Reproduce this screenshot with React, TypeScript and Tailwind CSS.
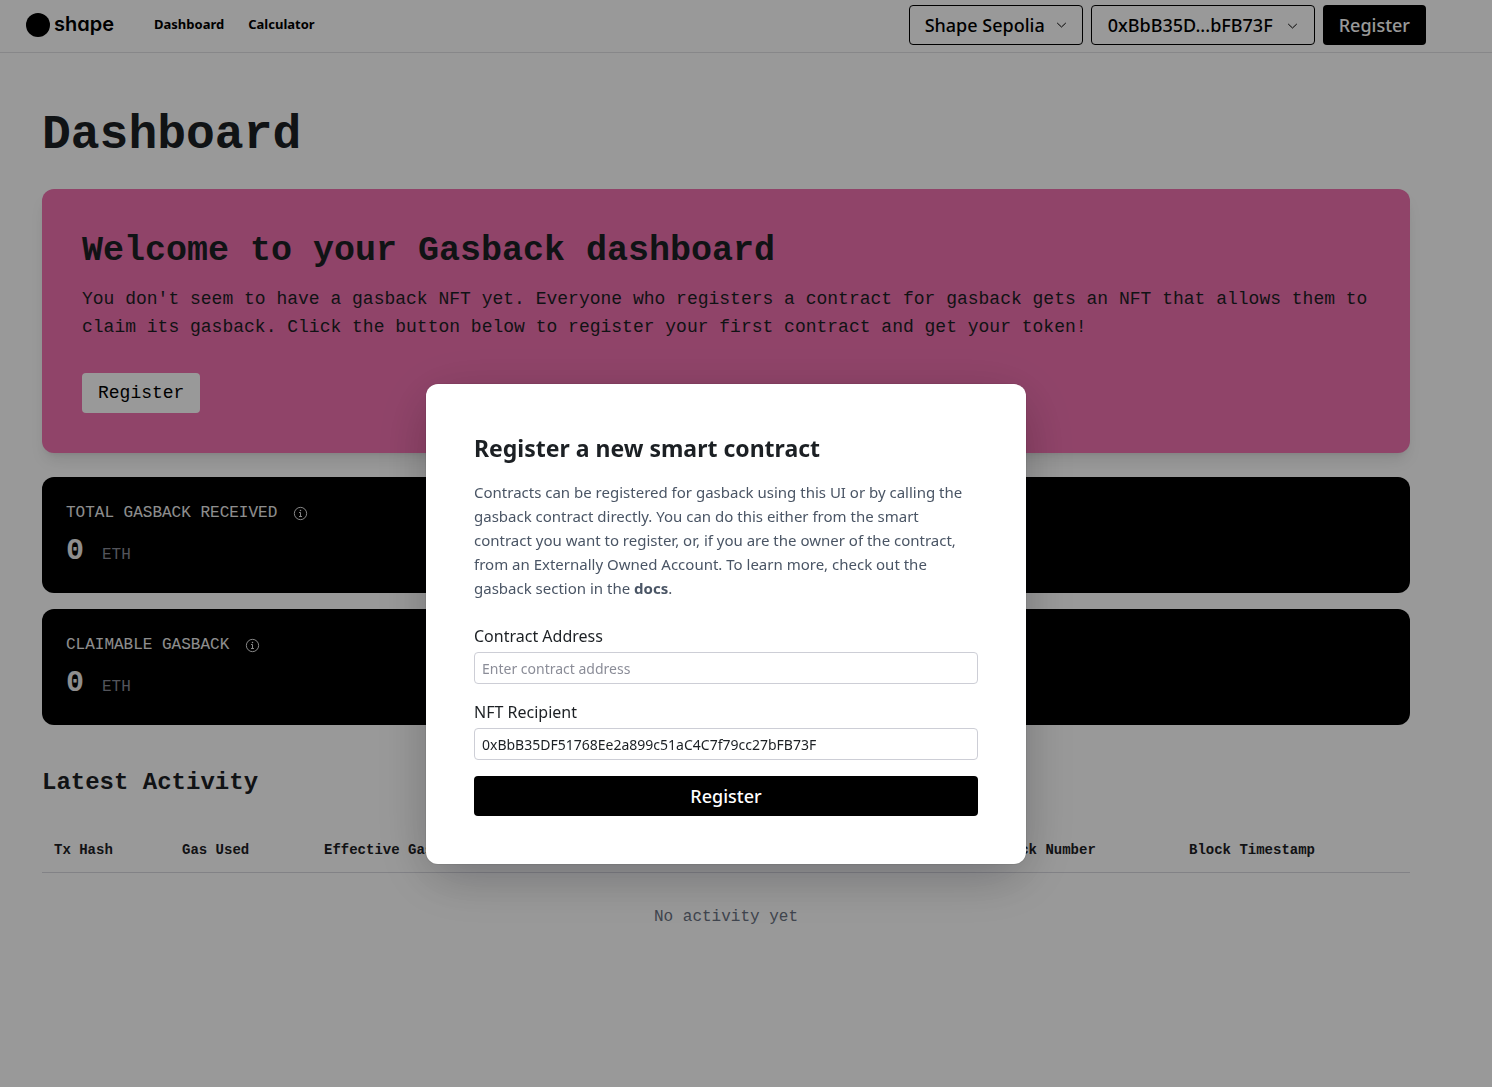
import React from 'react';

const mono = "font-['Liberation_Mono',monospace]";

function ChevronDown({ className = '' }: { className?: string }) {
  return (
    <svg className={className} width="15" height="15" viewBox="0 0 15 15" fill="none" stroke="currentColor" strokeLinecap="round" strokeLinejoin="round" aria-hidden="true">
      <path d="M3.5 6.25 7.5 10 11.5 6.25" />
    </svg>
  );
}

function InfoIcon() {
  return (
    <svg width="15" height="15" viewBox="0 0 15 15" fill="none" stroke="currentColor" strokeWidth="0.95" aria-hidden="true">
      <circle cx="7.5" cy="7.5" r="6.15" />
      <circle cx="7.5" cy="4.5" r="0.75" fill="currentColor" stroke="none" />
      <path d="M6 6.5H7.5V10.5M6 10.5H9" />
    </svg>
  );
}

function Header() {
  return (
    <header className="border-b border-[#e2e2e5] pr-10">
      <div className="flex h-[52px] items-center justify-between px-[26px] pb-0.5">
        <div className="flex items-center gap-10">
          <a href="#home" className="flex items-center gap-1 text-black" aria-label="shape">
            <svg width="24" height="24" viewBox="0 0 24 24" aria-hidden="true">
              <circle cx="12" cy="12" r="12" fill="currentColor" />
            </svg>
            <span className="pb-0.5 font-[Inter,sans-serif] text-[20px] leading-6 font-semibold [font-feature-settings:'cv11','ss03']">shape</span>
          </a>
          <nav className="flex gap-6 text-[13px] font-bold text-black">
            <a href="#dashboard">Dashboard</a>
            <a href="#calculator">Calculator</a>
          </nav>
        </div>
        <div className="flex items-center gap-2 text-lg font-medium text-black">
          <div className="relative">
            <select aria-label="Network" className="h-10 appearance-none rounded border border-black bg-transparent pr-9 pl-[15px]">
              <option>Shape Sepolia</option>
            </select>
            <ChevronDown className="pointer-events-none absolute top-3 right-3.5" />
          </div>
          <button type="button" aria-haspopup="menu" className="flex h-10 items-center gap-3 rounded border border-black pr-3.5 pl-4">
            0xBbB35D...bFB73F
            <ChevronDown />
          </button>
          <button type="button" className="h-10 rounded bg-black px-4 text-white">Register</button>
        </div>
      </div>
    </header>
  );
}

function StatCard({ label }: { label: string }) {
  return (
    <section className="flex flex-col gap-2 rounded-xl bg-black p-6">
      <div className="flex items-center gap-4 text-base text-[#ededed]">
        <h3>{label}</h3>
        <button type="button" aria-label={'About ' + label.toLowerCase()}>
          <InfoIcon />
        </button>
      </div>
      <p className="flex items-baseline gap-4.5 text-3xl leading-9 font-bold text-[#ededed]">
        0 <span className="text-base font-normal text-[#8b8d98]">ETH</span>
      </p>
    </section>
  );
}

function Activity() {
  return (
    <section className="mt-10">
      <h2 className="text-2xl leading-9 font-bold">Latest Activity</h2>
      <table className="mt-7 w-full table-fixed text-left text-sm">
        <thead>
          <tr className="h-[43px] border-b border-[#d9d9e0]">
            <th className="w-[128px] px-3">Tx Hash</th>
            <th className="w-[142px] px-3">Gas Used</th>
            <th className="px-3">Effective Gas Price</th>
            <th className="w-[194px] px-3">Block Number</th>
            <th className="w-[233px] px-3">Block Timestamp</th>
          </tr>
        </thead>
        <tbody>
          <tr>
            <td colSpan={5} className="py-8 text-center text-base text-gray-500">No activity yet</td>
          </tr>
        </tbody>
      </table>
    </section>
  );
}

function RegisterDialog() {
  return (
    <div className="fixed inset-0 flex items-start justify-center bg-black/40 pt-96 pr-10">
      <div
        role="dialog"
        aria-modal="true"
        aria-labelledby="dialog-title"
        className="w-full max-w-[600px] rounded-xl bg-white p-12 shadow-[0_0_0_1px_rgba(0,0,0,0.06),0_12px_60px_rgba(0,0,0,0.15),0_16px_48px_-8px_rgba(0,0,50,0.15)]"
      >
        <h2 id="dialog-title" className="text-[23px] leading-8 font-bold">Register a new smart contract</h2>
        <p className="mt-4 text-[15px] leading-6 text-gray-600">
          Contracts can be registered for gasback using this UI or by calling the gasback contract directly. You can do this either from the smart
          contract you want to register, or, if you are the owner of the contract, from an Externally Owned Account. To learn more, check out the
          gasback section in the <a href="#docs" className="font-bold">docs</a>.
        </p>
        <form className="mt-6 flex flex-col gap-4">
          <div className="flex flex-col gap-1">
            <label htmlFor="contract">Contract Address</label>
            <input id="contract" type="text" placeholder="Enter contract address" className="h-8 rounded border border-[#cdced6] px-[7px] text-sm placeholder:text-[#8b8d98]" />
          </div>
          <div className="flex flex-col gap-1">
            <label htmlFor="recipient">NFT Recipient</label>
            <input id="recipient" type="text" defaultValue="0xBbB35DF51768Ee2a899c51aC4C7f79cc27bFB73F" className="h-8 rounded border border-[#cdced6] px-[7px] text-sm" />
          </div>
          <button type="button" className="h-10 rounded bg-black text-lg font-medium text-white">Register</button>
        </form>
      </div>
    </div>
  );
}

export default function App() {
  return (
    <div className="min-h-screen bg-white font-['Noto_Sans',sans-serif] text-[#1c2024]">
      <Header />
      <main className={mono + ' pt-14 pr-[82px] pb-24 pl-[42px]'}>
        <h1 className="text-5xl leading-[52px] font-bold">Dashboard</h1>
        <section className="mt-7 rounded-xl bg-[#f072b0] p-10 shadow-lg">
          <h2 className="text-[35px] leading-11 font-bold">Welcome to your Gasback dashboard</h2>
          <p className="mt-3 text-lg leading-7">
            You don't seem to have a gasback NFT yet. Everyone who registers a contract for gasback gets an NFT that allows them to claim its gasback. Click the button below to register your first contract and get your token!
          </p>
          <button type="button" className="mt-8 h-10 rounded bg-white px-4 text-lg text-black">Register</button>
        </section>
        <div className="mt-6 flex flex-col gap-4">
          <StatCard label="TOTAL GASBACK RECEIVED" />
          <StatCard label="CLAIMABLE GASBACK" />
        </div>
        <Activity />
      </main>
      <RegisterDialog />
    </div>
  );
}
